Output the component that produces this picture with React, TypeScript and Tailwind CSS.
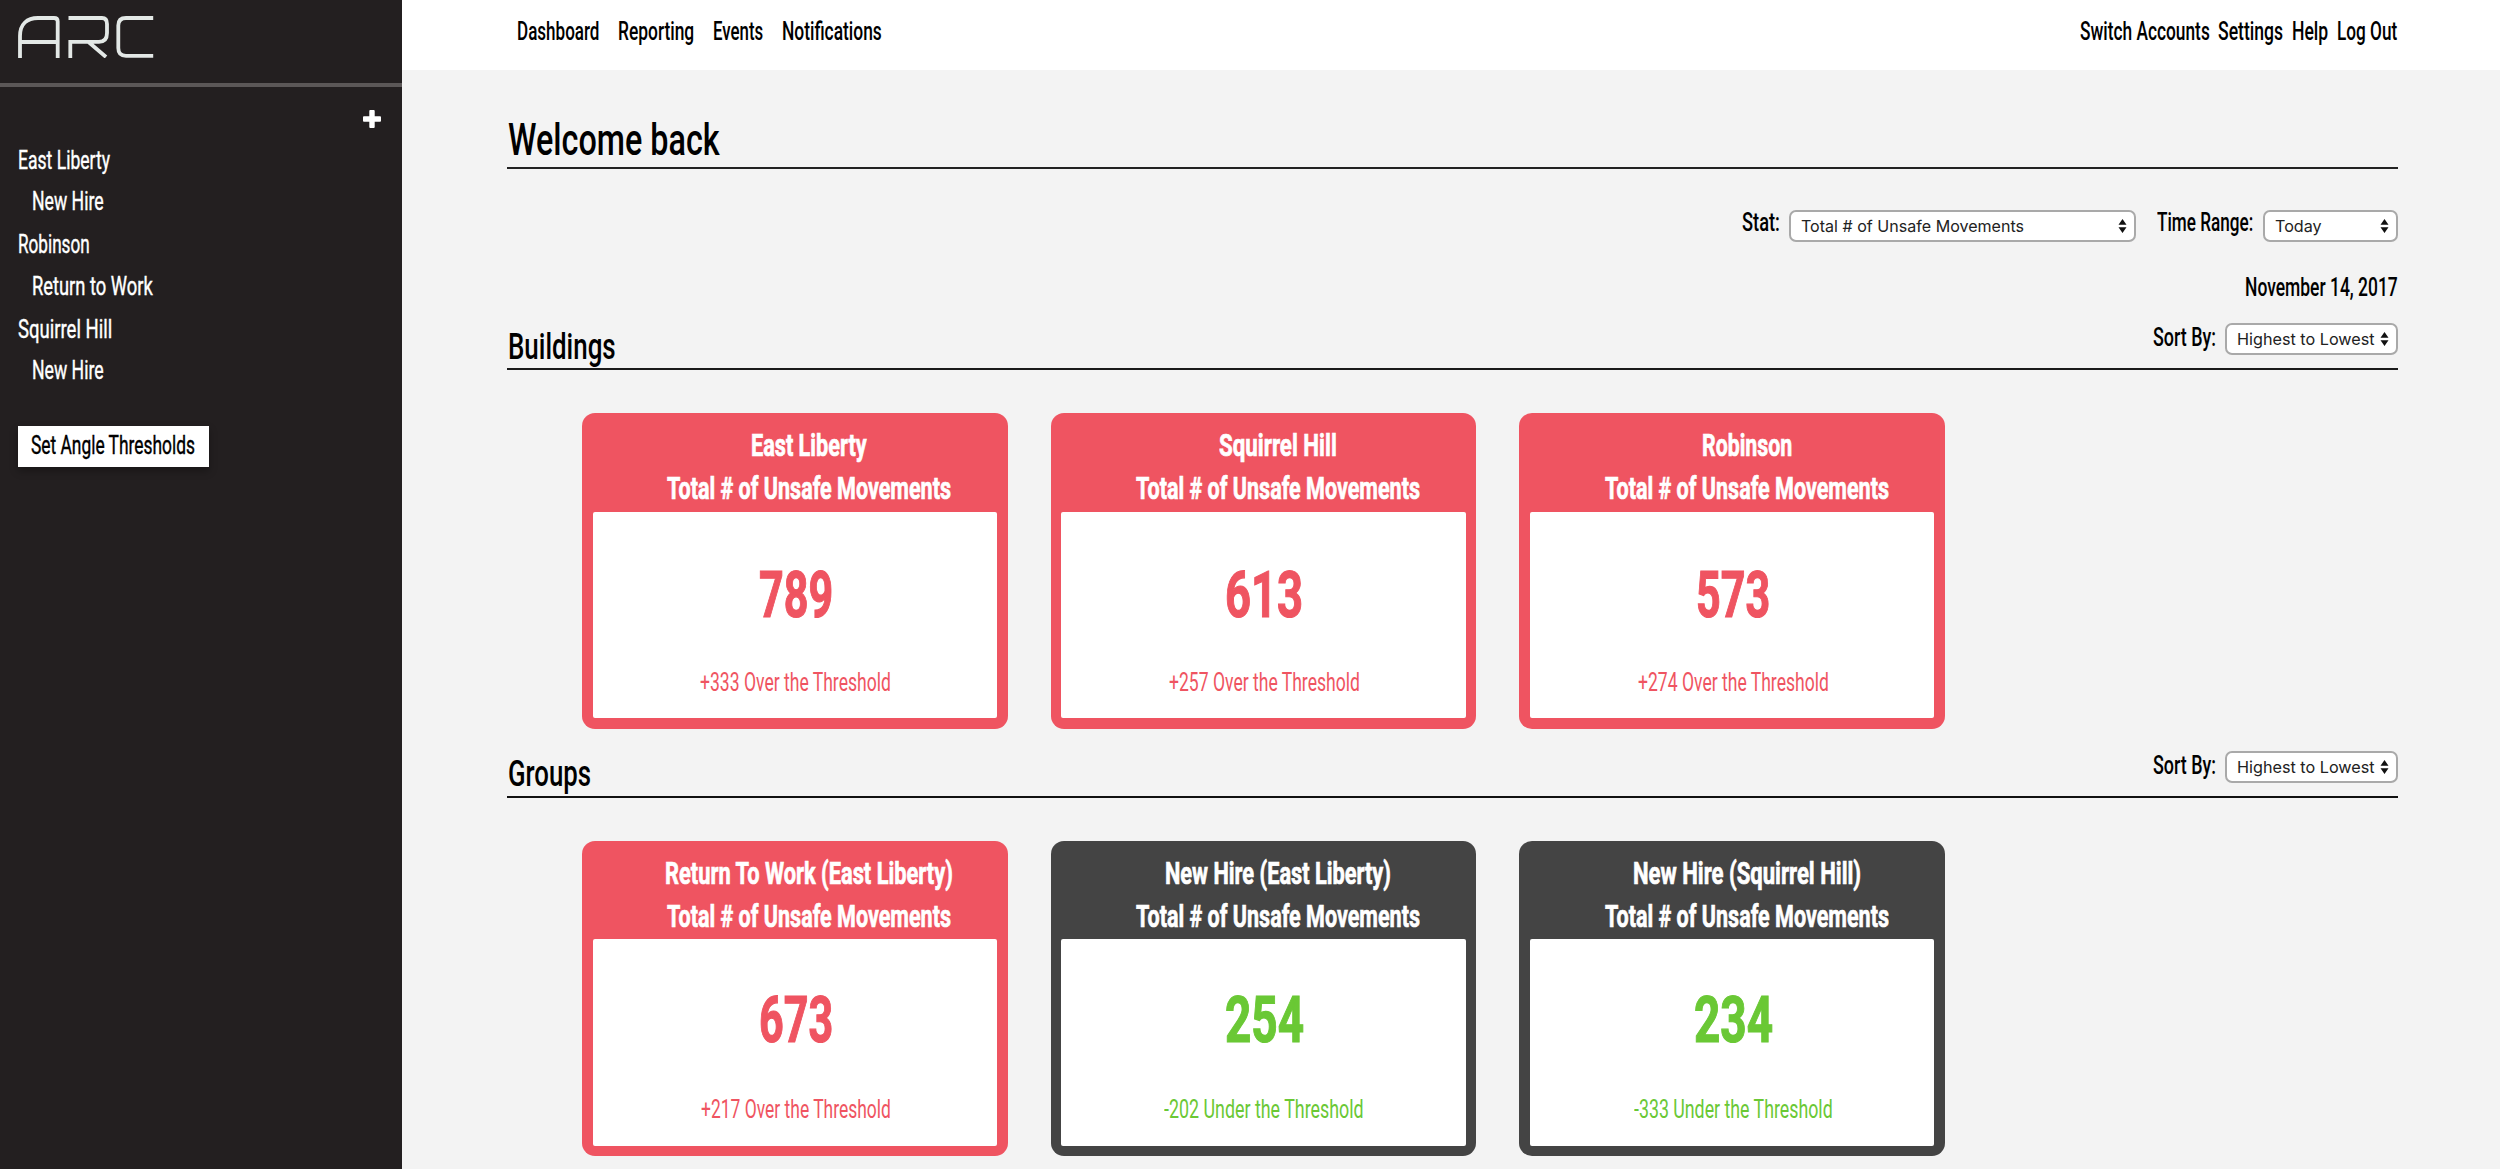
import { useLayoutEffect, useRef, useState } from "react";

type FitProps = { children: string; w: number; className?: string };

/* Condensed text: squeezes a line horizontally to the given width. */
function Fit({ children, w, className = "" }: FitProps) {
  const ref = useRef<HTMLSpanElement>(null);
  const [scale, setScale] = useState(1);
  useLayoutEffect(() => {
    if (ref.current) setScale(w / ref.current.offsetWidth);
  }, [w, children]);
  return (
    <span className={`block shrink-0 ${className}`} style={{ width: w }}>
      <span ref={ref} className="inline-block origin-left whitespace-nowrap align-top" style={{ transform: `scaleX(${scale})` }}>
        {children}
      </span>
    </span>
  );
}

const BODY = "text-[25px] leading-[26px] font-medium";

function Select({ label, textWidth, className }: { label: string; textWidth: number; className: string }) {
  return (
    <div className={`flex h-8 items-center justify-between rounded-[7px] border-2 border-[#a9a9a9] bg-white pl-[10px] pr-[7px] ${className}`}>
      <Fit w={textWidth} className="font-[Inter,sans-serif] text-[16.5px] leading-[28px] font-normal text-[#222]">{label}</Fit>
      <svg width="9" height="14" viewBox="0 0 9 14" fill="#111">
        <path d="M4.5 0 8.5 5.8h-8zM4.5 14 .5 8.2h8z" />
      </svg>
    </div>
  );
}

function Logo() {
  return (
    <svg width="136" height="42" viewBox="0 0 136 42" fill="none" stroke="#e3e8e6" strokeWidth="3.8">
      <path d="M2 42V20C2 8 9 2 20 2H36Q39.700 2 39.700 5.500V42M2 26H40" />
      <path d="M50.500 2H84Q89 2 89 8V17Q89 25.800 81 25.800H52.300V42M70.500 26 88 41" />
      <path d="M135.200 2H108Q100.300 2 100.300 9.500V32Q100.300 39.800 108 39.800H135.200" />
    </svg>
  );
}

const groups = [
  { name: "East Liberty", w: 92, sub: "New Hire", sw: 72 },
  { name: "Robinson", w: 72, sub: "Return to Work", sw: 121 },
  { name: "Squirrel Hill", w: 94, sub: "New Hire", sw: 72 },
];

function Sidebar() {
  return (
    <aside className="flex w-[402px] shrink-0 flex-col bg-[#231f20] text-white">
      <div className="h-[86.500px] border-b-4 border-[#5b5757] pl-[18px] pt-[16px]">
        <Logo />
      </div>
      <div className="flex h-[60px] justify-end pr-[21px] pt-[23.500px]">
        <svg width="18" height="18" viewBox="0 0 18 18" fill="white">
          <path d="M7.200 0h3.600q.9 0 .9.9v5.400h5.400q.9 0 .9.9v3.600q0 .9-.9.9h-5.400v5.400q0 .9-.9.9H7.200q-.9 0-.9-.9v-5.400H.9q-.9 0-.9-.9V7.200q0-.9.900-.9h5.400V.9q0-.9.900-.9z" />
        </svg>
      </div>
      <ul className="text-[25px] leading-[42px] [-webkit-text-stroke:0.4px_white]">
        {groups.map((g) => (
          <li key={g.name} className="h-[84.500px]">
            <Fit w={g.w} className="ml-[18px] h-[41.500px] leading-[28px]">{g.name}</Fit>
            <Fit w={g.sw} className="ml-[31.500px] leading-[27px]">{g.sub}</Fit>
          </li>
        ))}
      </ul>
      <div className="ml-[18px] mt-[25.500px] flex h-[41.500px] w-[190.500px] items-center justify-center bg-white text-black shadow-[0_4px_8px_rgba(0,0,0,0.3)]">
        <Fit w={164} className="text-[25px] leading-[26px] [-webkit-text-stroke:0.4px_black]">Set Angle Thresholds</Fit>
      </div>
    </aside>
  );
}

type CardData = { title: string; tw: number; value: string; vw: number; note: string; nw: number; ok?: boolean };

const buildings: CardData[] = [
  { title: "East Liberty", tw: 116, value: "789", vw: 74, note: "+333 Over the Threshold", nw: 191 },
  { title: "Squirrel Hill", tw: 118, value: "613", vw: 78, note: "+257 Over the Threshold", nw: 191 },
  { title: "Robinson", tw: 90, value: "573", vw: 74, note: "+274 Over the Threshold", nw: 191 },
];

const teams: CardData[] = [
  { title: "Return To Work (East Liberty)", tw: 288, value: "673", vw: 74, note: "+217 Over the Threshold", nw: 190 },
  { title: "New Hire (East Liberty)", tw: 226, value: "254", vw: 79, note: "-202 Under the Threshold", nw: 200 },
  { title: "New Hire (Squirrel Hill)", tw: 228, value: "234", vw: 79, note: "-333 Under the Threshold", nw: 199 },
];

function Card({ c, valueTop }: { c: CardData; valueTop: string }) {
  const bg = c.ok ? "bg-[#444]" : "bg-[#ef5461]";
  const fg = c.ok ? "text-[#6ac835]" : "text-[#ef5461]";
  return (
    <article className={`flex h-[315.500px] w-[425.500px] flex-col rounded-[13px] p-[10.500px] pt-[11px] ${bg}`}>
      <header className="flex h-[87.500px] flex-col items-center pl-[29px] text-[31px] leading-[43px] font-bold text-white [-webkit-text-stroke:0.7px_white]">
        <Fit w={c.tw}>{c.title}</Fit>
        <Fit w={284}>Total # of Unsafe Movements</Fit>
      </header>
      <div className={`flex flex-1 flex-col items-center rounded-[2px] bg-white pl-[2px] ${fg}`}>
        <div className={`h-[115px] ${valueTop}`}>
          <Fit w={c.vw} className="text-[64px] leading-[80px] font-bold [-webkit-text-stroke:1.2px_currentColor]">{c.value}</Fit>
        </div>
        <Fit w={c.nw} className="mt-[43px] text-[25px] leading-[26px]">{c.note}</Fit>
      </div>
    </article>
  );
}

type SectionProps = { title: string; w: number; cards: CardData[]; line: string; valueTop: string };

function Section({ title, w, cards, line, valueTop }: SectionProps) {
  return (
    <section>
      <div className={`flex h-[69px] items-end justify-between border-b-2 ${line}`}>
        <h2 className="pb-[1.500px] pl-[1px]">
          <Fit w={w} className="text-[36px] leading-[40px] font-medium">{title}</Fit>
        </h2>
        <div className="flex h-full items-start gap-[9.500px] pt-[22px]">
          <Fit w={63} className={`mt-[2px] ${BODY}`}>Sort By:</Fit>
          <Select label="Highest to Lowest" textWidth={137.5} className="w-[172.500px]" />
        </div>
      </div>
      <div className="flex gap-[43.200px] pl-[75.500px] pt-[43px]">
        {cards.map((c) => (
          <Card key={c.title} c={c} valueTop={valueTop} />
        ))}
      </div>
    </section>
  );
}

export default function App() {
  return (
    <div className="flex h-[1169px] w-[2500px] overflow-hidden bg-[#f3f3f3] font-[Roboto,sans-serif] text-black">
      <Sidebar />
      <div className="min-w-0 flex-1">
        <header className={`flex h-[70px] items-center justify-between bg-white pb-[7px] pl-[114.500px] pr-[102.500px] ${BODY}`}>
          <nav className="flex gap-[18.800px]">
            <Fit w={82.5}>Dashboard</Fit>
            <Fit w={76.500}>Reporting</Fit>
            <Fit w={50.5}>Events</Fit>
            <Fit w={99.500}>Notifications</Fit>
          </nav>
          <nav className="flex gap-[8.500px]">
            <Fit w={129.5}>Switch Accounts</Fit>
            <Fit w={65.5}>Settings</Fit>
            <Fit w={36.5}>Help</Fit>
            <Fit w={60.5}>Log Out</Fit>
          </nav>
        </header>
        <main className="ml-[104.500px] mr-[102.500px]">
          <h1 className="flex h-[99px] items-end border-b-2 border-[#222] pl-[1.500px]">
            <Fit w={212} className="text-[45px] leading-[54px] font-medium">Welcome back</Fit>
          </h1>
          <div className={`flex h-[73px] items-start justify-end pt-[41px] ${BODY}`}>
            <Fit w={38}>Stat:</Fit>
            <Select label="Total # of Unsafe Movements" textWidth={223} className="ml-[9.500px] w-[346.500px]" />
            <Fit w={96} className="ml-[21.500px]">Time Range:</Fit>
            <Select label="Today" textWidth={47} className="ml-[10px] w-[134.500px]" />
          </div>
          <div className={`flex justify-end pt-[33px] ${BODY}`}>
            <Fit w={153}>November 14, 2017</Fit>
          </div>
          <Section title="Buildings" w={108} cards={buildings} line="border-[#1a1a1a]" valueTop="pt-[44px] h-[115px]" />
          <Section
            title="Groups"
            w={83}
            cards={teams.map((t, i) => ({ ...t, ok: i > 0 }))}
            line="border-[#111]"
            valueTop="pt-[42px]"
          />
        </main>
      </div>
    </div>
  );
}
